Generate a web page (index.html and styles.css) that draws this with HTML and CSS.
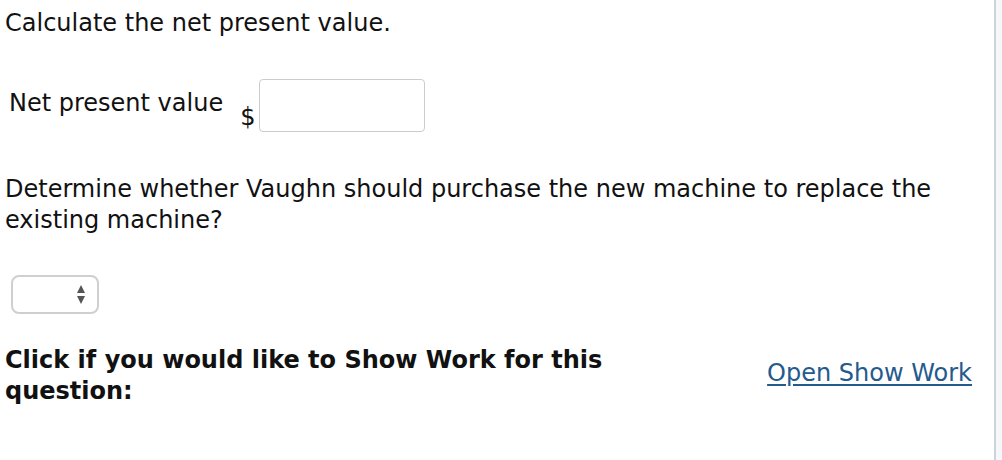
FILE: index.html
```html
<!DOCTYPE html>
<html>
<head>
<meta charset="utf-8">
<link rel="stylesheet" href="styles.css">
</head>
<body>
<div class="page">
  <main class="content">
    <p class="q q1">Calculate the net present value.</p>
    <div class="npv-row">
      <span class="npv-label">Net present value</span>
      <span class="dollar">$</span>
      <span class="input"></span>
    </div>
    <p class="q q2">Determine whether Vaughn should purchase the new machine to replace the existing machine?</p>
    <div class="select">
      <svg class="arrows" width="8" height="20" viewBox="0 0 8 20">
        <polygon points="4,0 8,8 0,8" fill="#555"/>
        <polygon points="0,11 8,11 4,19" fill="#555"/>
      </svg>
    </div>
    <div class="showwork">
      <p class="sw-text">Click if you would like to Show Work for this question:</p>
      <a class="sw-link" href="#">Open Show Work</a>
    </div>
  </main>
  <aside class="edge"></aside>
</div>
</body>
</html>
```
FILE: styles.css
```css
html, body {
  margin: 0;
  padding: 0;
  background: #fff;
}
.page {
  display: flex;
  width: 1002px;
  height: 460px;
  font-family: "DejaVu Sans", Verdana, sans-serif;
  color: #111;
}
.content {
  width: 994px;
  box-sizing: border-box;
  padding: 0 22px 0 5px;
}
.edge {
  width: 8px;
  background: #f5f7fa;
  border-left: 2px solid #cbd3dc;
  box-sizing: border-box;
}
.q {
  margin: 0;
  font-size: 24px;
  line-height: 31px;
}
.q1 {
  padding-top: 8px;
}
.npv-row {
  display: flex;
  align-items: flex-start;
  margin-top: 40px;
  padding-left: 4px;
}
.npv-label {
  font-size: 24px;
  line-height: 31px;
  margin-top: 9px;
}
.dollar {
  font-size: 24px;
  line-height: 31px;
  margin-top: 23px;
  margin-left: 17px;
  margin-right: 4px;
}
.input {
  width: 166px;
  height: 53px;
  box-sizing: border-box;
  border: 1.5px solid #cccccc;
  border-radius: 4px;
}
.q2 {
  margin-top: 41px;
  width: 950px;
}
.select {
  width: 88px;
  height: 39px;
  box-sizing: border-box;
  border: 2px solid #cfcfcf;
  border-radius: 8px;
  margin: 39px 0 0 6px;
  display: flex;
  align-items: center;
  justify-content: flex-end;
  padding-right: 12px;
}
.showwork {
  display: flex;
  justify-content: space-between;
  align-items: flex-start;
  margin-top: 31px;
}
.sw-text {
  margin: 0;
  width: 660px;
  font-size: 24px;
  line-height: 31px;
  font-weight: bold;
}
.sw-link {
  margin-top: 13px;
  font-size: 24px;
  line-height: 31px;
  color: #245a8c;
  text-decoration: underline;
  text-underline-offset: 3px;
}
```
